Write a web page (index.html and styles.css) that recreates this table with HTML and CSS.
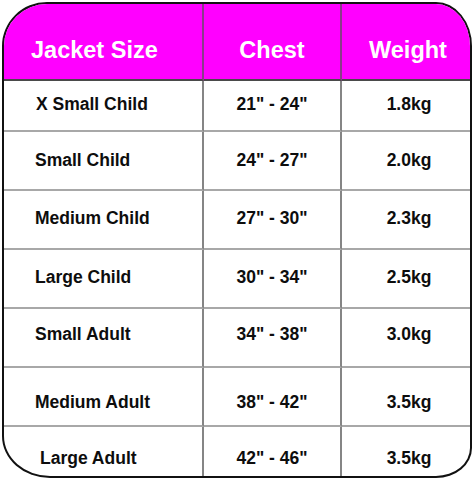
FILE: index.html
```html
<!DOCTYPE html>
<html>
<head>
<meta charset="utf-8">
<link rel="stylesheet" href="styles.css">
</head>
<body>
<div class="chart">
  <div class="cell head c1">Jacket Size</div>
  <div class="cell head c2">Chest</div>
  <div class="cell head c3">Weight</div>

  <div class="cell r1 c1 xs">X Small Child</div>
  <div class="cell r1 c2">21" - 24"</div>
  <div class="cell r1 c3">1.8kg</div>

  <div class="cell r2 c1">Small Child</div>
  <div class="cell r2 c2">24" - 27"</div>
  <div class="cell r2 c3">2.0kg</div>

  <div class="cell r3 c1">Medium Child</div>
  <div class="cell r3 c2">27" - 30"</div>
  <div class="cell r3 c3">2.3kg</div>

  <div class="cell r4 c1">Large Child</div>
  <div class="cell r4 c2">30" - 34"</div>
  <div class="cell r4 c3">2.5kg</div>

  <div class="cell r5 c1">Small Adult</div>
  <div class="cell r5 c2">34" - 38"</div>
  <div class="cell r5 c3">3.0kg</div>

  <div class="cell r6 c1">Medium Adult</div>
  <div class="cell r6 c2">38" - 42"</div>
  <div class="cell r6 c3">3.5kg</div>

  <div class="cell r7 c1 la">Large Adult</div>
  <div class="cell r7 c2">42" - 46"</div>
  <div class="cell r7 c3">3.5kg</div>
</div>
</body>
</html>
```
FILE: styles.css
```css
html, body {
  margin: 0;
  padding: 0;
  background: #ffffff;
}
body {
  padding: 2px;
  font-family: "Liberation Sans", Arial, sans-serif;
}
.chart {
  box-sizing: border-box;
  width: 470px;
  height: 476px;
  border: 2px solid #111;
  border-radius: 45px 36px 36px 48px / 44px 44px 30px 42px;
  overflow: hidden;
  display: grid;
  grid-template-columns: 200px 138px 128px;
  grid-template-rows: 77px 51px 59px 59px 59px 59px 59px 49px;
  background: #fff;
}
.cell {
  box-sizing: border-box;
  display: flex;
  align-items: center;
  justify-content: center;
  font-weight: bold;
  font-size: 17.5px;
  color: #0d0d0d;
  border-bottom: 2px solid #a8a8a8;
  white-space: nowrap;
}
.c1, .c2 {
  border-right: 2px solid #858585;
}
.c1 {
  justify-content: flex-start;
  padding-left: 31px;
}
.c3 {
  padding-left: 6px;
}
.head {
  background: #ff00ff;
  color: #ffffff;
  font-size: 23.5px;
  font-weight: bold;
  padding-top: 17px;
  border-bottom: 2px solid #4a4a4a;
}
.head.c1, .head.c2 {
  border-right: 2px solid #8a3a8a;
}
.head.c1 {
  padding-left: 27px;
}
.head.c3 {
  padding-left: 4px;
}
.xs {
  padding-left: 32px;
}
.la {
  padding-left: 36px;
}
.r1 { padding-bottom: 3px; }
.r3, .r4 { padding-bottom: 2px; }
.r5 { padding-bottom: 6px; }
.r6 { padding-top: 12px; }
.r7 { padding-top: 14px; border-bottom: none; }
```
